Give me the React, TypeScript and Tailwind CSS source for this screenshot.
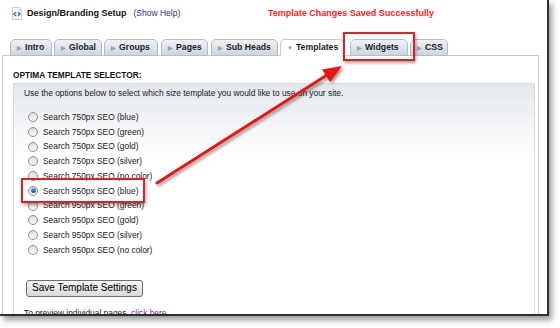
import React from 'react';

const tabs = [
  { label: 'Intro', w: 'w-[42px]', ml: 'ml-0', active: false },
  { label: 'Global', w: 'w-[48px]', ml: 'ml-[2px]', active: false },
  { label: 'Groups', w: 'w-[54px]', ml: 'ml-[2px]', active: false },
  { label: 'Pages', w: 'w-[47px]', ml: 'ml-[3px]', active: false },
  { label: 'Sub Heads', w: 'w-[67px]', ml: 'ml-[3px]', active: false },
  { label: 'Templates', w: 'w-[64px]', ml: 'ml-[2px]', active: true },
  { label: 'Widgets', w: 'w-[58px]', ml: 'ml-[6px]', active: false },
  { label: 'CSS', w: 'w-[38px]', ml: 'ml-[2px]', active: false },
];

const templates = [
  'Search 750px SEO (blue)',
  'Search 750px SEO (green)',
  'Search 750px SEO (gold)',
  'Search 750px SEO (silver)',
  'Search 750px SEO (no color)',
  'Search 950px SEO (blue)',
  'Search 950px SEO (green)',
  'Search 950px SEO (gold)',
  'Search 950px SEO (silver)',
  'Search 950px SEO (no color)',
];

function PageIcon() {
  return (
    <svg width="12" height="13" viewBox="0 0 12 13" className="shrink-0">
      <path d="M1.5 0.5 H8 L10.5 3 V12.5 H1.5 Z" fill="#fdfdfd" stroke="#c9ced6" />
      <path d="M8 0.5 V3 H10.5" fill="#eef1f5" stroke="#c9ced6" />
      <path d="M5 5 L3 7 L5 9" fill="none" stroke="#2a74d0" strokeWidth="1.4" />
      <path d="M7 5 L9 7 L7 9" fill="none" stroke="#2a74d0" strokeWidth="1.4" />
    </svg>
  );
}

function Radio({ checked }: { checked: boolean }) {
  return (
    <span className="w-[10px] h-[10px] rounded-full border border-[#8c9196] bg-linear-to-b from-[#d9dcdf] to-[#fbfbfb] flex items-center justify-center shrink-0">
      {checked && <span className="w-[5px] h-[5px] rounded-full bg-linear-to-b from-[#5fa2e0] to-[#10509a]" />}
    </span>
  );
}

export default function App() {
  return (
    <div className="relative w-[560px] h-[328px] bg-white overflow-hidden font-['Liberation_Sans',Arial,sans-serif] text-[#111]">
      {/* Window */}
      <div className="w-[549px] h-[316px] border-r-2 border-b-2 border-[#2e2e2e] shadow-[3px_4px_6px_rgba(0,0,0,0.4)] overflow-hidden flex flex-col bg-white">
        {/* Header */}
        <div className="h-[27px] pl-[11px] flex items-center shrink-0">
          <div className="w-[257px] flex items-center">
            <PageIcon />
            <span className="ml-[4px] text-[9px] font-bold leading-none">Design/Branding Setup</span>
            <span className="ml-[7px] text-[8.5px] leading-none text-[#1d3a6e]">(Show Help)</span>
          </div>
          <span className="text-[9px] font-bold leading-none text-[#ff1a1a]">Template Changes Saved Successfully</span>
        </div>

        {/* Tabs */}
        <div className="mt-[12px] pl-[10px] flex items-end h-[17px] -mb-px relative z-10 shrink-0">
          {tabs.map((t) => (
            <div
              key={t.label}
              className={`${t.w} ${t.ml} h-[17px] rounded-t-[5px] border flex items-center pl-[6px] gap-[3px] text-[8.7px] font-bold leading-none ${
                t.active
                  ? 'bg-white border-[#c9c9c9] border-b-white'
                  : 'bg-linear-to-b from-[#eef2f6] to-[#cbd6e1] border-[#b1bdc9]'
              }`}
            >
              <span className="text-[6px] text-[#9aa3ad]">{t.active ? '▼' : '▶'}</span>
              <span className="text-[#1e1e1e]">{t.label}</span>
            </div>
          ))}
        </div>

        {/* Panel */}
        <div className="ml-[2px] w-[537px] flex-1 border border-[#cbcbcb] pl-[10px] flex flex-col">
          <div className="pt-[14px] h-[27px] text-[8.3px] font-bold leading-[10px] text-[#111]">
            OPTIMA TEMPLATE SELECTOR:
          </div>
          <div className="w-[522px] flex-1 border border-[#d6dadf] bg-[linear-gradient(to_bottom,#e2e7ec_0px,#f6f7f9_45px,#ffffff_75px)] pl-[10px] pt-[4px] flex flex-col">
            <div className="text-[8.4px] leading-[10px] text-[#1a1a1a]">
              Use the options below to select which size template you would like to use on your site.
            </div>
            <div className="mt-[11.6px] pl-[4px] flex flex-col">
              {templates.map((name, i) => (
                <div key={name} className="h-[14.78px] flex items-center gap-[5px] text-[8.4px] text-[#1a1a1a]">
                  <Radio checked={i === 5} />
                  <span className="leading-none">{name}</span>
                </div>
              ))}
            </div>
            <button className="mt-[22.6px] ml-[2px] w-[117px] h-[17px] rounded-[3px] border border-[#6f6f6f] bg-linear-to-b from-[#f6f6f6] to-[#d9d9d9] text-[10px] leading-none text-black shrink-0">
              Save Template Settings
            </button>
            <div className="mt-[11px] text-[8.4px] leading-[10px] text-[#1a1a1a]">
              To preview individual pages, <span className="text-[#6b2fa8]">click here</span>
            </div>
          </div>
        </div>
      </div>

      {/* Highlight boxes */}
      <div className="absolute left-[343px] top-[32px] w-[72px] h-[29px] border-2 border-[#ea1c1c] shadow-[1px_2px_3px_rgba(0,0,0,0.35)] z-20" />
      <div className="absolute left-[21px] top-[178px] w-[124px] h-[25px] border-2 border-[#ea1c1c] shadow-[1px_2px_3px_rgba(0,0,0,0.35)] z-20" />

      {/* Arrow */}
      <svg
        className="absolute left-0 top-0 z-20 [filter:drop-shadow(2px_2px_1.5px_rgba(0,0,0,0.4))]"
        width="560"
        height="328"
        viewBox="0 0 560 328"
      >
        <line x1="157" y1="183" x2="327" y2="75" stroke="#ea1414" strokeWidth="3" strokeLinecap="round" />
        <polygon points="342,66 322,69.5 330,82" fill="#ea1414" />
      </svg>
    </div>
  );
}
